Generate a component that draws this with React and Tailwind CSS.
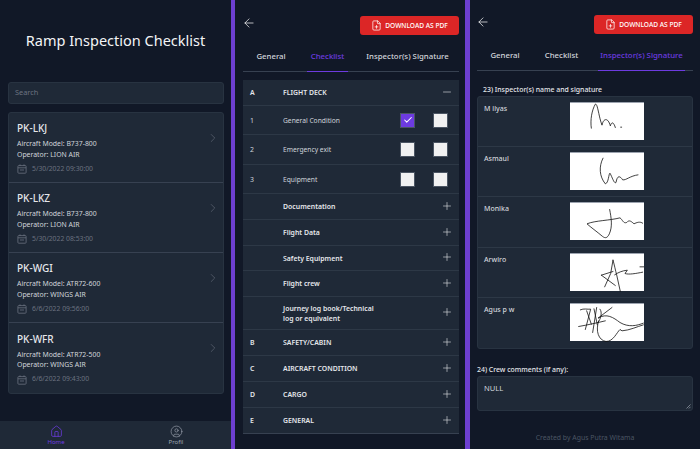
import { ArrowLeft, ChevronRight, CircleUser, Check, FilePlus, Home, Minus, Plus } from "lucide-react";

const aircraft = [
  { reg: "PK-LKJ", model: "B737-800", operator: "LION AIR", date: "5/30/2022 09:30:00" },
  { reg: "PK-LKZ", model: "B737-800", operator: "LION AIR", date: "5/30/2022 08:53:00" },
  { reg: "PK-WGI", model: "ATR72-600", operator: "WINGS AIR", date: "6/6/2022 09:56:00" },
  { reg: "PK-WFR", model: "ATR72-500", operator: "WINGS AIR", date: "6/6/2022 09:43:00" },
];

const checks = [
  { no: "1", label: "General Condition", checked: true, h: "h-[29px]" },
  { no: "2", label: "Emergency exit", checked: false, h: "h-[30px]" },
  { no: "3", label: "Equipment", checked: false, h: "h-[29px]" },
];

const sections = [
  { label: "Documentation", h: "h-[26px]" },
  { label: "Flight Data", h: "h-[26px]" },
  { label: "Safety Equipment", h: "h-[25px]" },
  { label: "Flight crew", h: "h-[26px]" },
  { label: "Journey log book/Technical log or equivalent", h: "h-[33px]" },
  { no: "B", label: "SAFETY/CABIN", h: "h-[26px]" },
  { no: "C", label: "AIRCRAFT CONDITION", h: "h-[26px]" },
  { no: "D", label: "CARGO", h: "h-[26px]" },
  { no: "E", label: "GENERAL", h: "h-[25px]" },
];

// signature strokes, in 222x113 units
const inspectors = [
  {
    name: "M ilyas",
    paths: [
      "M64 75 C60 50 66 20 76 3 C83 0 86 40 96 66 C100 45 114 42 121 68 C126 52 132 60 136 73",
      "M152 72 L155 72",
    ],
  },
  {
    name: "Asmaul",
    paths: ["M99 15 C86 40 88 70 106 92 C116 90 116 60 120 60 C128 75 132 92 138 88 C142 65 150 68 158 80 C168 82 180 68 204 65"],
  },
  {
    name: "Monika",
    paths: ["M119 19 C124 45 128 70 118 92 C112 105 106 106 98 100 C80 85 62 72 51 62 C75 52 120 52 150 44 C158 50 160 62 170 58 C178 48 185 56 192 62 C200 58 210 54 218 60"],
  },
  {
    name: "Arwiro",
    paths: [
      "M129 18 L122 58 L104 98 M94 63 L129 52 M94 63 L136 94",
      "M129 18 C134 35 136 48 140 62 L151 112",
      "M134 62 C145 55 155 50 172 48 L165 58 C176 62 198 58 218 54 M210 38 L222 38",
    ],
  },
  {
    name: "Agus p w",
    paths: [
      "M31 17 C42 12 52 16 62 15 L46 76 M80 10 L68 85 M26 67 C55 62 85 55 106 50",
      "M90 15 C98 25 92 45 84 55 M126 10 L84 42 C110 26 130 40 150 55 C175 70 200 65 220 57",
      "M86 50 C76 80 85 108 108 112 C130 112 140 85 150 76 L156 80 C180 78 200 68 220 62",
      "M50 20 L64 60 M72 14 L82 62",
    ],
  },
];

function CalendarIcon() {
  return (
    <svg width="10" height="10" viewBox="0 0 10 10" fill="none" stroke="currentColor" strokeWidth="0.8">
      <rect x="0.9" y="1.6" width="8.2" height="7.6" rx="0.8" />
      <path d="M0.9 3.8H9.1M3 0.4V2M7 0.4V2M3 6H7" />
    </svg>
  );
}

function Signature({ paths }) {
  return (
    <div className="w-[74px] h-[38px] bg-white border-t border-t-[#9ca3af]">
      <svg width="74" height="38" viewBox="0 0 222 113" fill="none" stroke="#111" strokeWidth="2.4" strokeLinecap="round" strokeLinejoin="round">
        {paths.map((d, i) => (
          <path key={i} d={d} />
        ))}
      </svg>
    </div>
  );
}

function Box({ checked }) {
  if (checked) {
    return (
      <div className="w-[15px] h-[15px] bg-[#6d3be0] border border-[#4b5563] flex items-center justify-center text-white">
        <Check size={10} strokeWidth={2.5} />
      </div>
    );
  }
  return <div className="w-[15px] h-[15px] bg-[#f1f1f1] border border-[#4b5563]" />;
}

function TopBar() {
  return (
    <div className="flex items-center justify-between h-[19px]">
      <ArrowLeft size={14} strokeWidth={1.2} className="text-white -mt-[5px] -ml-px" />
      <button className="w-[99px] h-[19px] bg-[#dc2626] rounded-[3px] text-white text-[6.6px] font-medium flex items-center justify-center gap-[3px]">
        <FilePlus size={11} strokeWidth={1.6} />
        DOWNLOAD AS PDF
      </button>
    </div>
  );
}

function Tabs({ active }) {
  const tabs = [
    { label: "General", w: "w-[40px]" },
    { label: "Checklist", w: "w-[41px]" },
    { label: "Inspector(s) Signature", w: "w-[87px]" },
  ];
  return (
    <div className="flex gap-4 pl-2 h-[35px] mt-[2px] border-b border-[#374151] text-[7.8px] font-medium">
      {tabs.map((t) => (
        <div
          key={t.label}
          className={`${t.w} pt-[5px] flex items-center justify-center whitespace-nowrap -mb-px border-b ${
            t.label === active ? "text-[#6d3be0] border-[#6d3be0]" : "text-[#d1d5db] border-transparent"
          }`}
        >
          {t.label}
        </div>
      ))}
    </div>
  );
}

function ListPanel() {
  return (
    <div className="w-[231px] shrink-0 flex flex-col bg-[#111827]">
      <h1 className="h-[82px] flex items-center justify-center text-[14.5px] text-[#f3f4f6]">Ramp Inspection Checklist</h1>
      <div className="ml-2 mr-[7px] h-[22px] bg-[#1f2937] border border-[#283341] rounded-[3px] px-[6px] flex items-center text-[7.4px] text-[#6b7280]">
        Search
      </div>
      <div className="ml-2 mr-[7px] mt-2 bg-[#1f2937] border border-[#283341] rounded-[3px] divide-y divide-[#374151]">
        {aircraft.map((a) => (
          <div key={a.reg} className="h-[70px] pl-2 pr-[3px] pt-px flex items-center justify-between">
            <div>
              <div className="text-[10px] leading-[16px] font-medium text-[#e5e7eb]">{a.reg}</div>
              <div className="text-[6.9px] leading-[10.5px] mt-[3px] text-[#d1d5db]">
                <div>Aircraft Model: {a.model}</div>
                <div>Operator: {a.operator}</div>
              </div>
              <div className="flex items-center gap-[5px] mt-[2px] h-[14px] text-[6.8px] text-[#6b7280]">
                <CalendarIcon />
                {a.date}
              </div>
            </div>
            <ChevronRight size={14} strokeWidth={1} className="text-[#6b7280] self-start mt-[17px]" />
          </div>
        ))}
      </div>
      <div className="mt-auto h-[28px] bg-[#1f2937] flex">
        <div className="w-[112px] flex flex-col items-center pt-[4px] text-[#6d3be0]">
          <Home size={13} strokeWidth={1.4} />
          <span className="text-[6px] leading-[9px]">Home</span>
        </div>
        <div className="flex-1 pl-[9px] flex flex-col items-center pt-[4px] text-[#9ca3af]">
          <CircleUser size={13} strokeWidth={1.2} />
          <span className="text-[6px] leading-[9px]">Profil</span>
        </div>
      </div>
    </div>
  );
}

function ChecklistPanel() {
  return (
    <div className="w-[230px] shrink-0 bg-[#111827] pt-[16px] pl-2 pr-[6px] overflow-hidden">
      <TopBar />
      <Tabs active="Checklist" />
      <div className="mt-2 bg-[#1f2937] border-b border-[#374151] divide-y divide-[#2d3846] text-[6.9px]">
        <div className="h-[26px] flex items-center pl-[7px] pr-[6px] font-semibold text-[#e5e7eb]">
          <span className="w-[33px] pt-[2px]">A</span>
          <span className="flex-1 pt-[2px]">FLIGHT DECK</span>
          <Minus size={12} strokeWidth={1.2} className="text-[#e5e7eb] -mt-[2px]" />
        </div>
        {checks.map((c) => (
          <div key={c.no} className={`${c.h} flex items-center pl-[7px] pr-[11px] text-[#d1d5db]`}>
            <span className="w-[33px] pt-[2px]">{c.no}</span>
            <span className="flex-1 pt-[2px] text-[6.7px]">{c.label}</span>
            <Box checked={c.checked} />
            <div className="w-[18px]" />
            <Box checked={false} />
          </div>
        ))}
        {sections.map((s) => (
          <div key={s.label} className={`${s.h} flex items-center pl-[7px] pr-[6px] font-semibold text-[#e5e7eb]`}>
            <span className="w-[33px] shrink-0 pt-[2px]">{s.no}</span>
            <span className="flex-1 pt-[2px] leading-[10.5px] pr-[56px]">{s.label}</span>
            <Plus size={12} strokeWidth={1.2} className="-mt-[2px]" />
          </div>
        ))}
      </div>
      <div className="mt-[13px] text-[7px] leading-[10px] font-medium text-[#e5e7eb]">Result of inspection</div>
    </div>
  );
}

function SignaturePanel() {
  return (
    <div className="flex-1 min-w-0 bg-[#111827] pt-[15px] px-[7px] flex flex-col">
      <TopBar />
      <Tabs active="Inspector(s) Signature" />
      <div className="mt-[14px] pl-[6px] text-[6.9px] leading-[10px] font-medium text-[#e5e7eb]">23) Inspector(s) name and signature</div>
      <div className="mt-[1px] bg-[#1f2937] border border-[#283341] rounded-[3px] divide-y divide-[#2d3846]">
        {inspectors.map((p) => (
          <div key={p.name} className="h-[50.2px] flex pl-[6px] pt-[5px] text-[7px] font-medium text-[#d1d5db]">
            <span className="w-[86px] leading-[13px]">{p.name}</span>
            <Signature paths={p.paths} />
          </div>
        ))}
      </div>
      <div className="mt-[15px] text-[6.9px] leading-[11px] font-medium text-[#e5e7eb]">24) Crew comments (if any):</div>
      <div className="relative mt-[1px] h-[35px] bg-[#1f2937] border border-[#283341] rounded-[3px] px-[6px] pt-[6px] text-[7.6px] leading-[10px] text-[#d1d5db]">
        NULL
        <svg width="5" height="5" viewBox="0 0 5 5" className="absolute right-[1px] bottom-[1px] text-[#9ca3af]" stroke="currentColor" strokeWidth="0.7">
          <path d="M0.5 4.5L4.5 0.5M2.8 4.5L4.5 2.8" />
        </svg>
      </div>
      <div className="mt-[22px] text-center text-[6.9px] text-[#4b5563]">Created by Agus Putra Witama</div>
    </div>
  );
}

export default function App() {
  return (
    <div className="w-[700px] h-[449px] overflow-hidden flex bg-[#111827] font-['Noto_Sans',sans-serif]">
      <ListPanel />
      <div className="w-1 bg-[#6d3fd0] shrink-0" />
      <ChecklistPanel />
      <div className="w-[5px] bg-[#6d3fd0] shrink-0" />
      <SignaturePanel />
    </div>
  );
}
